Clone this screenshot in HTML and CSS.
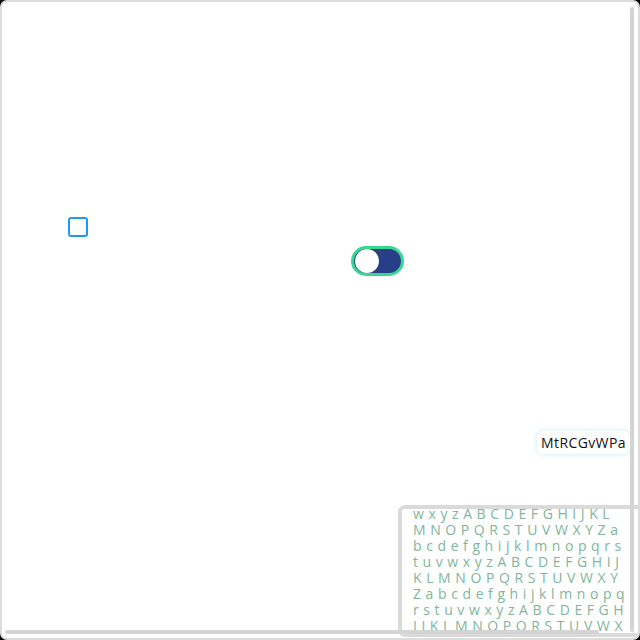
FILE: index.html
```html
<!DOCTYPE html>
<html>
<head>
<meta charset="utf-8">
<link rel="stylesheet" href="styles.css">
</head>
<body>
<div class="frame">
  <div class="canvas">
    <label class="check"><input type="checkbox" class="check-input"><span class="check-box"></span></label>
    <div class="toggle"><span class="knob"></span></div>
    <div class="tag">MtRCGvWPa</div>
    <div class="letters">
      <div class="letters-inner">
        <div class="line">wxyzABCDEFGHIJKL</div>
        <div class="line">MNOPQRSTUVWXYZa</div>
        <div class="line">bcdefghijklmnopqrs</div>
        <div class="line">tuvwxyzABCDEFGHIJ</div>
        <div class="line">KLMNOPQRSTUVWXY</div>
        <div class="line">Zabcdefghijklmnopq</div>
        <div class="line">rstuvwxyzABCDEFGH</div>
        <div class="line">IJKLMNOPQRSTUVWX</div>
      </div>
    </div>
  </div>
  <div class="vbar"></div>
  <div class="hbar"></div>
</div>
</body>
</html>
```
FILE: styles.css
```css
html {
  margin: 0;
  background: #000;
}
body {
  margin: 0;
  width: 640px;
  height: 640px;
  overflow: hidden;
}
.frame {
  position: relative;
  box-sizing: border-box;
  width: 640px;
  height: 640px;
  background: #fff;
  border: 2px solid #dcdcdc;
  border-radius: 7px;
  overflow: hidden;
}
.canvas {
  position: relative;
  width: 100%;
  height: 100%;
}
.check {
  position: absolute;
  left: 66px;
  top: 215px;
  display: block;
}
.check-input {
  display: none;
}
.check-box {
  display: block;
  box-sizing: border-box;
  width: 20px;
  height: 20px;
  border: 2px solid #2196f3;
  border-radius: 3px;
  background: #fff;
}
.toggle {
  position: absolute;
  left: 349px;
  top: 244px;
  box-sizing: border-box;
  width: 53px;
  height: 30px;
  border: 3px solid #36d88f;
  border-radius: 15px;
  background: #283f87;
  display: flex;
  align-items: center;
  padding-left: 1px;
}
.knob {
  display: block;
  width: 24px;
  height: 24px;
  border-radius: 50%;
  background: #fff;
}
.tag {
  position: absolute;
  left: 535px;
  top: 429px;
  padding: 2px 4px;
  font-family: "Open Sans", "Noto Sans", sans-serif;
  font-size: 14px;
  letter-spacing: 0.4px;
  color: #111;
  background: #fff;
  border-radius: 6px;
  box-shadow: 0 0 4px 1px #d8eef7;
  white-space: nowrap;
}
.letters {
  position: absolute;
  left: 396px;
  top: 503px;
  box-sizing: border-box;
  width: 260px;
  height: 132px;
  border: 4px solid #dadada;
  border-radius: 7px;
  background: #fff;
  overflow: hidden;
}
.letters-inner {
  margin-top: -3px;
  padding-left: 11px;
  font-family: "Open Sans", "Noto Sans", sans-serif;
  font-size: 14px;
  line-height: 16px;
  letter-spacing: 4.6px;
  color: #7fb69b;
}
.line {
  white-space: nowrap;
}
.vbar {
  position: absolute;
  right: 4px;
  top: 5px;
  width: 4px;
  height: 625px;
  border-radius: 2px;
  background: #d4d4d4;
}
.hbar {
  position: absolute;
  left: 3px;
  bottom: 4px;
  width: 594px;
  height: 4px;
  border-radius: 2px;
  background: #d4d4d4;
}
```
